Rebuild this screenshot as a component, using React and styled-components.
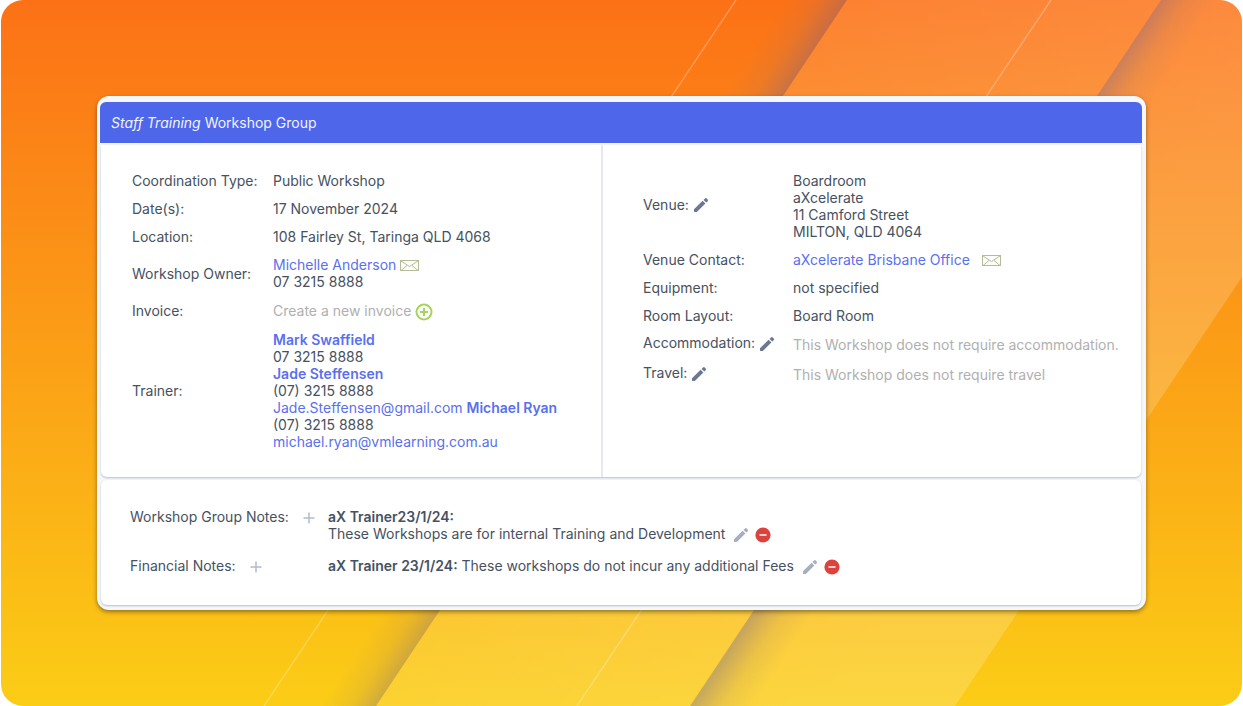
import React from "react";
import styled, { createGlobalStyle } from "styled-components";

const GlobalStyle = createGlobalStyle`
  *, *::before, *::after { box-sizing: border-box; }
  body {
    margin: 0;
    background: #fff;
    color: #465161;
    font: 400 14px/17px Inter, "Liberation Sans", sans-serif;
  }
`;

const Page = styled.main`
  display: grid;
  min-height: 100vh;
  padding: 0 1px;
  > * { grid-area: 1 / 1; }
`;

const Backdrop = styled.div`
  display: flex;
  overflow: hidden;
  border-radius: 22px;
  background: linear-gradient(#fc7116, #fbcd16);
  svg { flex: 1; width: 100%; min-height: 100%; height: 0; }
`;

const Stage = styled.div`
  position: relative;
  padding: 96px;
`;

const Panel = styled.section`
  padding: 6px 4px 5px 3px;
  border-radius: 12px;
  background: #f5f7fa;
  box-shadow: 0 2px 4px rgba(60, 50, 20, 0.55);
`;

const Header = styled.h1`
  margin: 0;
  padding: 12px 11px;
  border-radius: 6px 6px 0 0;
  background: #4d66ea;
  color: #f1f4ff;
  font-size: 14px;
  font-weight: 400;
  line-height: 17px;
`;

const Card = styled.div`
  margin: 2px 1px 0;
  border-radius: ${(p) => (p.$round ? "6px" : "0 0 6px 6px")};
  background: #fff;
  box-shadow: 0 1px 2px rgba(70, 85, 110, 0.35);
`;

const Columns = styled(Card)`
  display: grid;
  grid-template-columns: 500fr 540fr;
`;

const Column = styled.div`
  padding: 21px 30px 22px ${(p) => (p.$wide ? "40px" : "31px")};
  & + & { border-left: 2px solid #e6eaf0; }
`;

const Details = styled.table`
  width: 100%;
  border-collapse: collapse;
  table-layout: fixed;
`;

const Label = styled.th`
  width: ${(p) => p.$width}px;
  padding: ${(p) => (p.$editable ? "4px 0 7px" : "6px 0 5px")};
  font-weight: 400;
  text-align: left;
  white-space: nowrap;
`;

const Value = styled.td`
  height: ${(p) => (p.$tall ? "30px" : "28px")};
  padding: 6px 0 5px;
  color: ${(p) => (p.$muted ? "#b0b0b0" : "inherit")};
  white-space: nowrap;
`;

const Notes = styled(Card)`
  display: grid;
  grid-template-columns: 198px 1fr;
  row-gap: 15px;
  margin-top: 3px;
  padding: 28px 29px 31px;
`;

const NoteLabel = styled.div`
  display: flex;
  align-items: flex-start;
  gap: 14px;
`;

const NoteText = styled.div`
  display: flex;
  align-items: flex-end;
  gap: 8px;
  strong { font-weight: 600; }
`;

const Actions = styled.span`
  display: flex;
  gap: 6px;
`;

const Link = styled.a`
  color: #5a70ee;
  font-weight: ${(p) => (p.$strong ? 600 : 400)};
  text-decoration: none;
`;

const IconButton = styled.button`
  display: inline-flex;
  align-items: center;
  justify-content: center;
  width: ${(p) => p.$size || 16}px;
  height: 17px;
  margin: 0 0 0 ${(p) => p.$gap || 0}px;
  padding: 2px 0 0;
  border: 0;
  background: none;
  color: ${(p) => p.$color || "#6b7891"};
  vertical-align: top;
  cursor: pointer;
  svg { flex: none; display: block; }
`;

const Pencil = () => (
  <svg width="16" height="16" viewBox="0 0 16 16" fill="currentColor" aria-hidden="true">
    <path d="M1 12.2 9.6 3.8l2.8 2.7-8.6 8.4-2.1.1a.8.8 0 0 1-.8-.8zM10.500 2.900 12 1.500q.9-.8 1.800 0l.9.9q.8.900 0 1.800l-1.400 1.400z" />
  </svg>
);

const Envelope = () => (
  <svg width="19" height="12" viewBox="0 0 19 12" fill="none" stroke="#b8bb98" aria-hidden="true">
    <rect x=".5" y=".5" width="18" height="10" fill="#fdfdf9" />
    <path d="m1 1 8.500 5.500L18 1M1 10.500l6-5M18 10.500l-6-5" />
  </svg>
);

const CirclePlus = () => (
  <svg width="18" height="18" viewBox="0 0 18 18" fill="none" stroke="#a4d65e" strokeWidth="2" aria-hidden="true">
    <circle cx="9" cy="9" r="7.500" />
    <path d="M9 5v8M5 9h8" />
  </svg>
);

const Plus = () => (
  <svg width="12" height="12" viewBox="0 0 12 12" stroke="#b3bccb" strokeWidth="1.500" aria-hidden="true">
    <path d="M6 .5v11M.5 6h11" />
  </svg>
);

const CircleMinus = () => (
  <svg width="16" height="16" viewBox="0 0 16 16" aria-hidden="true">
    <circle cx="8" cy="8" r="7.600" fill="#de423c" />
    <path d="M4.500 8h7" stroke="#fbe3e2" strokeWidth="1.800" />
  </svg>
);

const EditButton = ({ label, gap, muted }) => (
  <IconButton type="button" aria-label={label} $gap={gap} $color={muted && "#a5afc1"}>
    <Pencil />
  </IconButton>
);

const AddButton = ({ label }) => (
  <IconButton type="button" aria-label={label} $size={12}>
    <Plus />
  </IconButton>
);

const NoteActions = ({ name }) => (
  <Actions>
    <EditButton label={`Edit ${name}`} muted />
    <IconButton type="button" aria-label={`Remove ${name}`}>
      <CircleMinus />
    </IconButton>
  </Actions>
);

const MailButton = ({ name, gap }) => (
  <IconButton type="button" aria-label={`Email ${name}`} $size={19} $gap={gap}>
    <Envelope />
  </IconButton>
);

const Stripes = () => (
  <svg viewBox="0 0 1241 706" preserveAspectRatio="none" aria-hidden="true">
    <defs>
      <linearGradient id="shadeLeft" gradientUnits="userSpaceOnUse" x1="611" y1="353" x2="570" y2="326">
        <stop offset="0" stopColor="#6c6096" stopOpacity=".34" />
        <stop offset=".5" stopColor="#8c7080" stopOpacity=".12" />
        <stop offset="1" stopColor="#8c7080" stopOpacity="0" />
      </linearGradient>
      <linearGradient id="shadeRight" gradientUnits="userSpaceOnUse" x1="925" y1="353" x2="966" y2="380">
        <stop offset="0" stopColor="#6c6096" stopOpacity=".36" />
        <stop offset=".5" stopColor="#8c7080" stopOpacity=".13" />
        <stop offset="1" stopColor="#8c7080" stopOpacity="0" />
      </linearGradient>
      <linearGradient id="sheen" gradientUnits="userSpaceOnUse" x1="611" y1="353" x2="925" y2="560">
        <stop offset="0" stopColor="#fff" stopOpacity=".12" />
        <stop offset="1" stopColor="#fff" stopOpacity=".18" />
      </linearGradient>
    </defs>
    <path d="M846 0 375 706H275L746 0z" fill="url(#shadeLeft)" />
    <path d="M846 0H1241V277L954 706H375z" fill="url(#sheen)" />
    <path d="M1160 0H1241V30L790 706H689z" fill="url(#shadeRight)" />
    <path d="M735 0 263 706M1050 0 576 706" stroke="#fff" strokeOpacity=".24" strokeWidth="1.500" />
  </svg>
);

export default function App() {
  return (
    <>
      <GlobalStyle />
      <Page>
        <Backdrop>
          <Stripes />
        </Backdrop>
        <Stage>
          <Panel>
            <Header>
              <em>Staff Training</em> Workshop Group
            </Header>
            <Columns>
              <Column>
                <Details>
                  <tbody>
                    <tr>
                      <Label scope="row" $width={141}>Coordination Type:</Label>
                      <Value>Public Workshop</Value>
                    </tr>
                    <tr>
                      <Label scope="row">Date(s):</Label>
                      <Value>17 November 2024</Value>
                    </tr>
                    <tr>
                      <Label scope="row">Location:</Label>
                      <Value>108 Fairley St, Taringa QLD 4068</Value>
                    </tr>
                    <tr>
                      <Label scope="row">Workshop Owner:</Label>
                      <Value>
                        <Link href="#owner">Michelle Anderson</Link>
                        <MailButton name="Michelle Anderson" gap={4} />
                        <br />
                        07 3215 8888
                      </Value>
                    </tr>
                    <tr>
                      <Label scope="row">Invoice:</Label>
                      <Value $muted $tall>
                        Create a new invoice
                        <IconButton type="button" aria-label="Create a new invoice" $size={18} $gap={4}>
                          <CirclePlus />
                        </IconButton>
                      </Value>
                    </tr>
                    <tr>
                      <Label scope="row">Trainer:</Label>
                      <Value>
                        <Link href="#mark" $strong>Mark Swaffield</Link>
                        <br />
                        07 3215 8888
                        <br />
                        <Link href="#jade" $strong>Jade Steffensen</Link>
                        <br />
                        (07) 3215 8888
                        <br />
                        <Link href="mailto:Jade.Steffensen@gmail.com">Jade.Steffensen@gmail.com</Link>{" "}
                        <Link href="#michael" $strong>Michael Ryan</Link>
                        <br />
                        (07) 3215 8888
                        <br />
                        <Link href="mailto:michael.ryan@vmlearning.com.au">michael.ryan@vmlearning.com.au</Link>
                      </Value>
                    </tr>
                  </tbody>
                </Details>
              </Column>
              <Column $wide>
                <Details>
                  <tbody>
                    <tr>
                      <Label scope="row" $width={150} $editable>
                        Venue:
                        <EditButton label="Edit venue" gap={4} />
                      </Label>
                      <Value>
                        Boardroom
                        <br />
                        aXcelerate
                        <br />
                        11 Camford Street
                        <br />
                        MILTON, QLD 4064
                      </Value>
                    </tr>
                    <tr>
                      <Label scope="row">Venue Contact:</Label>
                      <Value>
                        <Link href="#venue">aXcelerate Brisbane Office</Link>
                        <MailButton name="aXcelerate Brisbane Office" gap={12} />
                      </Value>
                    </tr>
                    <tr>
                      <Label scope="row">Equipment:</Label>
                      <Value>not specified</Value>
                    </tr>
                    <tr>
                      <Label scope="row">Room Layout:</Label>
                      <Value>Board Room</Value>
                    </tr>
                    <tr>
                      <Label scope="row" $editable>
                        Accommodation:
                        <EditButton label="Edit accommodation" gap={4} />
                      </Label>
                      <Value $muted $tall>This Workshop does not require accommodation.</Value>
                    </tr>
                    <tr>
                      <Label scope="row" $editable>
                        Travel:
                        <EditButton label="Edit travel" gap={4} />
                      </Label>
                      <Value $muted $tall>This Workshop does not require travel</Value>
                    </tr>
                  </tbody>
                </Details>
              </Column>
            </Columns>
            <Notes $round>
              <NoteLabel>
                Workshop Group Notes:
                <AddButton label="Add workshop group note" />
              </NoteLabel>
              <NoteText>
                <span>
                  <strong>aX Trainer23/1/24:</strong>
                  <br />
                  These Workshops are for internal Training and Development
                </span>
                <NoteActions name="workshop group note" />
              </NoteText>
              <NoteLabel>
                Financial Notes:
                <AddButton label="Add financial note" />
              </NoteLabel>
              <NoteText>
                <span>
                  <strong>aX Trainer 23/1/24:</strong> These workshops do not incur any additional Fees
                </span>
                <NoteActions name="financial note" />
              </NoteText>
            </Notes>
          </Panel>
        </Stage>
      </Page>
    </>
  );
}
